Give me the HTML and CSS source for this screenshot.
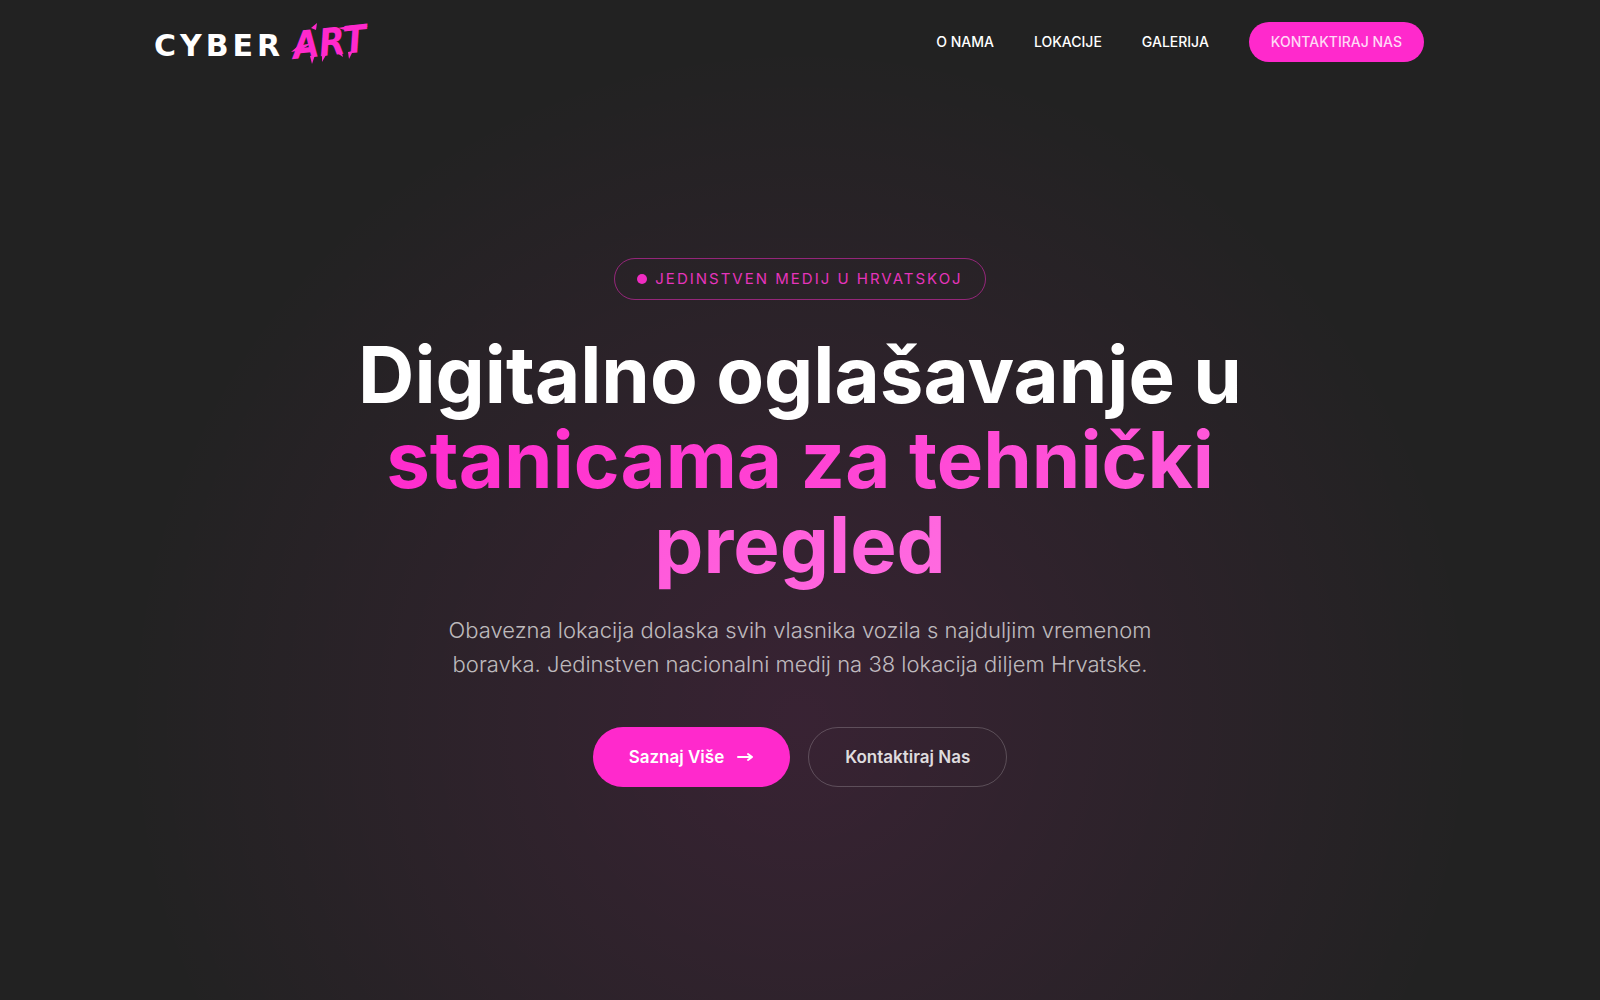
FILE: index.html
```html
<!DOCTYPE html>
<html lang="hr">
<head>
    <meta charset="UTF-8">
    <meta name="viewport" content="width=device-width, initial-scale=1.0">
    <title>Cyber Art</title>
    <link rel="stylesheet" href="styles.css">
</head>
<body>
<header class="header">
    <div class="header-inner">
        <a href="#" class="logo" aria-label="Cyber Art">
            <svg width="220" height="52" viewBox="0 0 220 52">
                <text class="logo-cyber" x="0" y="40">CYBER</text>
                <text class="logo-art" x="140" y="43" transform="rotate(-6 140 43)">ART</text>
                <!-- brush streaks -->
                <g class="logo-brush">
                    <path d="M137 36 L144 30 L158 27 L150 32 L142 35 Z"/>
                    <path d="M184 12 L200 9 L214 10 L209 12 L194 15 Z"/>
                    <path d="M157 12 L163 7 L162 14 Z"/>
                    <path d="M156 40 L161 39 L158 48 Z"/>
                    <path d="M168 39 L172 39 L168 46 Z"/>
                    <path d="M183 37 L188 37 L189 41 Z"/>
                    <path d="M194 36 L199 35 L195 43 Z"/>
                </g>
            </svg>
        </a>
        <nav class="nav">
            <a href="#o-nama">O NAMA</a>
            <a href="#lokacije">LOKACIJE</a>
            <a href="#galerija">GALERIJA</a>
            <a href="#kontakt" class="nav-btn">KONTAKTIRAJ NAS</a>
        </nav>
    </div>
</header>

<main class="hero">
    <div class="badge"><span class="dot"></span>JEDINSTVEN MEDIJ U HRVATSKOJ</div>
    <h1>Digitalno oglašavanje u <span class="gradient">stanicama za tehnički pregled</span></h1>
    <p>Obavezna lokacija dolaska svih vlasnika vozila s najduljim vremenom boravka. Jedinstven nacionalni medij na 38 lokacija diljem Hrvatske.</p>
    <div class="buttons">
        <a href="#o-nama" class="btn btn-primary">Saznaj Više
            <svg width="18" height="16" viewBox="0 0 18 16" fill="none" stroke="currentColor" stroke-width="2" stroke-linecap="round" stroke-linejoin="round">
                <path d="M2 8h14M12 5l4 3-4 3"/>
            </svg>
        </a>
        <a href="#kontakt" class="btn btn-outline">Kontaktiraj Nas</a>
    </div>
</main>
</body>
</html>
```
FILE: styles.css
```css
* {
    box-sizing: border-box;
}
body {
    margin: 0;
    min-height: 100vh;
    display: flex;
    flex-direction: column;
    font-family: Inter, "Open Sans", sans-serif;
    color: #fff;
    background: radial-gradient(circle at 50% 72%, rgba(255, 41, 204, 0.1), transparent 63%) #222;
}
a {
    color: inherit;
    text-decoration: none;
}

/* header */
.header {
    padding: 16px 24px;
}
.header-inner {
    max-width: 1248px;
    margin: 0 auto;
    display: flex;
    align-items: center;
    justify-content: space-between;
}
.logo {
    display: flex;
    margin-left: -22px;
}
.logo-cyber {
    font: bold 30px "DejaVu Sans", sans-serif;
    letter-spacing: 4px;
    fill: #fff;
}
.logo-art {
    font: italic bold 38px "DejaVu Sans Condensed", "DejaVu Sans", sans-serif;
    fill: #ff29cc;
}
.logo-brush {
    fill: #ff29cc;
}
.nav {
    display: flex;
    align-items: center;
    gap: 40px;
    font-size: 14px;
    line-height: 40px;
    font-weight: 500;
}
.nav-btn {
    padding: 0 22px;
    border-radius: 20px;
    background: #ff29cc;
    color: #ffd9f6;
}

/* hero */
.hero {
    flex: 1;
    display: flex;
    flex-direction: column;
    align-items: center;
    justify-content: center;
    padding: 0 24px 40px;
    text-align: center;
}
.badge {
    display: flex;
    align-items: center;
    gap: 8px;
    padding: 0 22px;
    line-height: 40px;
    border: 1px solid rgba(255, 41, 204, 0.5);
    border-radius: 21px;
    color: #e634bc;
    font-size: 15px;
    font-weight: 400;
    letter-spacing: 2px;
}
.dot {
    width: 10px;
    height: 10px;
    border-radius: 50%;
    background: #f02cc2;
}
h1 {
    max-width: 1000px;
    margin: 32px 0 26px;
    font-size: 78px;
    line-height: 85px;
    font-weight: 700;
}
.gradient {
    background: linear-gradient(135deg, #ff29cc, #ff6be0);
    -webkit-background-clip: text;
    background-clip: text;
    color: transparent;
}
p {
    max-width: 720px;
    margin: 0 0 46px;
    font-size: 22px;
    line-height: 34px;
    font-weight: 300;
    color: rgba(255, 255, 255, 0.7);
}
.buttons {
    display: flex;
    gap: 18px;
}
.btn {
    display: flex;
    align-items: center;
    gap: 12px;
    height: 60px;
    padding: 0 36px;
    border-radius: 30px;
    font-size: 17px;
    font-weight: 600;
}
.btn-primary {
    background: #ff29cc;
}
.btn-outline {
    border: 1px solid rgba(255, 255, 255, 0.2);
    color: rgba(255, 255, 255, 0.85);
}
```
